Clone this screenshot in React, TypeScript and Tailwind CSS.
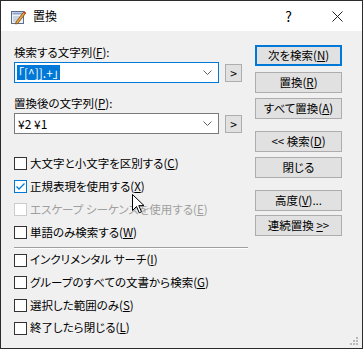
import React from "react";

function U({ children }: { children: React.ReactNode }) {
  return <span className="underline underline-offset-[1px]">{children}</span>;
}

function Combo({ children, focused }: { children: React.ReactNode; focused?: boolean }) {
  return (
    <div className="flex items-center">
      <div
        className={`w-[205px] h-[21px] bg-white border flex items-center pl-[2px] pr-[6px] ${
          focused ? "border-[#0078d7]" : "border-[#7a7a7a]"
        }`}
      >
        <div className="flex-1 flex items-center">{children}</div>
        <svg width="9" height="5" viewBox="0 0 9 5" className="shrink-0">
          <path d="M0.5 0.5 L4.5 4.5 L8.5 0.5" fill="none" stroke="#606060" strokeWidth="1" />
        </svg>
      </div>
      <div className="ml-[6px] w-[17px] h-[18px] bg-[#e1e1e1] border border-[#adadad] flex items-center justify-center text-[12px] leading-none">
        &gt;
      </div>
    </div>
  );
}

function Check({
  label,
  k,
  checked,
  disabled,
  h,
}: {
  label: string;
  k: string;
  checked?: boolean;
  disabled?: boolean;
  h: string;
}) {
  return (
    <div className={`flex items-center ${h}`}>
      <span
        className={`w-[13px] h-[13px] shrink-0 border bg-white flex items-center justify-center ${
          disabled ? "border-[#cccccc]" : checked ? "border-[#0078d7]" : "border-[#333333]"
        }`}
      >
        {checked && (
          <svg width="11" height="11" viewBox="0 0 11 11">
            <path d="M1.5 5.5 L4 8 L9.5 2.5" fill="none" stroke="#0078d7" strokeWidth="1.3" />
          </svg>
        )}
      </span>
      <span className={`ml-[3px] whitespace-nowrap ${disabled ? "text-[#a0a0a0]" : "text-black"}`}>
        {label}(<U>{k}</U>)
      </span>
    </div>
  );
}

function Btn({ children, mt, focus }: { children: React.ReactNode; mt: string; focus?: boolean }) {
  return (
    <div
      className={`${mt} h-[21px] flex items-center justify-center bg-[#e1e1e1] whitespace-nowrap ${
        focus ? "border-2 border-[#0078d7]" : "border border-[#adadad]"
      }`}
    >
      {children}
    </div>
  );
}

function NoteIcon() {
  return (
    <svg width="17" height="16" viewBox="0 0 17 16">
      <rect x="1.5" y="2.5" width="12" height="12" fill="#eef3fa" stroke="#5a6f8f" />
      <rect x="2.5" y="3.5" width="10" height="2" fill="#8ea4c8" />
      <path d="M3 8 H11 M3 10 H9 M3 12 H8" stroke="#a9b6c9" strokeWidth="1" />
      <path d="M6 13 L14 2.5 L15.8 4 L7.8 14.5 L5.5 15 Z" fill="#e8a33a" stroke="#7a4a12" strokeWidth="0.8" />
      <path d="M13.2 3.5 L14 2.5 L15.8 4 L15 5 Z" fill="#d03030" />
    </svg>
  );
}

function Cursor() {
  return (
    <svg width="13" height="20" viewBox="0 0 13 20" className="absolute left-[131px] top-[193px]">
      <path
        d="M0.5 0.5 L0.5 16.5 L4.5 12.5 L7.2 18.8 L9.5 17.8 L6.8 11.6 L12 11.6 Z"
        fill="white"
        stroke="black"
        strokeWidth="1"
        strokeLinejoin="miter"
      />
    </svg>
  );
}

export default function App() {
  return (
    <div className="relative w-[363px] h-[349px] border border-[#2b2b2b] bg-[#f0f0f0] flex flex-col font-['Noto_Sans_CJK_JP',sans-serif] text-[11.5px] text-black [font-feature-settings:'palt'] overflow-hidden">
      {/* title bar */}
      <div className="h-[30px] bg-white flex items-center shrink-0">
        <div className="ml-[9px] mt-[1px]">
          <NoteIcon />
        </div>
        <span className="ml-[6px] text-[12px]">置換</span>
        <span className="ml-auto mr-[40px] text-[14px] leading-none">?</span>
        <svg width="11" height="11" viewBox="0 0 11 11" className="mr-[19px]">
          <path d="M0.5 0.5 L10.5 10.5 M10.5 0.5 L0.5 10.5" stroke="#222" strokeWidth="1" />
        </svg>
      </div>

      {/* body */}
      <div className="flex pl-[13px]">
        <div className="w-[234px] flex flex-col">
          <div className="mt-[13px] h-[16px] leading-[16px]">
            検索する文字列(<U>F</U>):
          </div>
          <div className="mt-[2px]">
            <Combo focused>
              <span className="bg-[#0078d7] text-white leading-[15px] px-[1px] text-[12px]">「[^]].+」</span>
            </Combo>
          </div>
          <div className="mt-[12px] h-[16px] leading-[16px]">
            置換後の文字列(<U>P</U>):
          </div>
          <div className="mt-[2px]">
            <Combo>
              <span className="leading-[15px] pl-[1px] text-[12px]">¥2 ¥1</span>
            </Combo>
          </div>

          <div className="mt-[18px]">
            <Check h="h-[23px]" label="大文字と小文字を区別する" k="C" />
            <Check h="h-[23px]" label="正規表現を使用する" k="X" checked />
            <Check h="h-[23px]" label="エスケープ シーケンスを使用する" k="E" disabled />
            <Check h="h-[23px]" label="単語のみ検索する" k="W" />
          </div>

          <div className="mt-[3px] h-[2px] border-t border-[#a0a0a0] border-b border-b-white" />

          <div>
            <Check h="h-[22px]" label="インクリメンタル サーチ" k="I" />
            <Check h="h-[23px]" label="グループのすべての文書から検索" k="G" />
            <Check h="h-[23px]" label="選択した範囲のみ" k="S" />
            <Check h="h-[22px]" label="終了したら閉じる" k="L" />
          </div>
        </div>

        <div className="ml-[7px] w-[87px] flex flex-col">
          <Btn mt="mt-[14px]" focus>
            次を検索(<U>N</U>)
          </Btn>
          <Btn mt="mt-[6px]">
            置換(<U>R</U>)
          </Btn>
          <Btn mt="mt-[5px]">
            すべて置換(<U>A</U>)
          </Btn>
          <Btn mt="mt-[12px]">
            &lt;&lt; 検索(<U>D</U>)
          </Btn>
          <Btn mt="mt-[5px]">閉じる</Btn>
          <Btn mt="mt-[12px]">
            高度(<U>V</U>)...
          </Btn>
          <Btn mt="mt-[4px]">
            連続置換&nbsp;<U>&gt;</U>&gt;
          </Btn>
        </div>
      </div>

      {/* resize grip */}
      <svg width="9" height="9" viewBox="0 0 9 9" className="absolute right-[4px] bottom-[3px]">
        <rect x="7" y="1" width="2" height="2" fill="#b8b8b8" />
        <rect x="4" y="4" width="2" height="2" fill="#b8b8b8" />
        <rect x="7" y="4" width="2" height="2" fill="#b8b8b8" />
        <rect x="1" y="7" width="2" height="2" fill="#b8b8b8" />
        <rect x="4" y="7" width="2" height="2" fill="#b8b8b8" />
        <rect x="7" y="7" width="2" height="2" fill="#b8b8b8" />
      </svg>

      <Cursor />
    </div>
  );
}
